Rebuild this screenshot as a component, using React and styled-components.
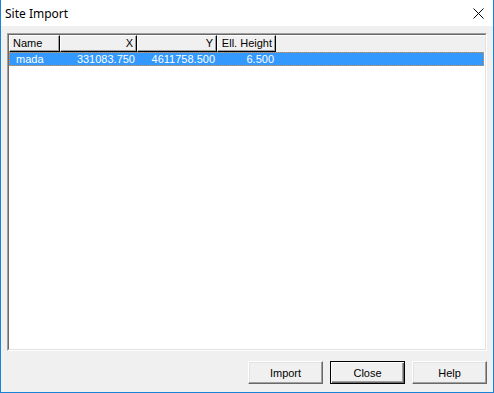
import styled, { createGlobalStyle } from 'styled-components';

const GlobalStyle = createGlobalStyle`
	html, body {
		margin: 0;
		padding: 0;
		background: #ffffff;
	}
	* {
		box-sizing: border-box;
	}
`;

const Window = styled.div`
	width: 494px;
	height: 393px;
	display: flex;
	flex-direction: column;
	border: 1px solid #1883d7;
	border-top: none;
	background: #f0f0f0;
	font-family: 'Liberation Sans', Arial, sans-serif;
	font-size: 11px;
	color: #000;
`;

const TitleBar = styled.div`
	height: 26px;
	flex: none;
	display: flex;
	align-items: center;
	justify-content: space-between;
	background: #ffffff;
	padding: 0 9px 0 4px;
`;

const Title = styled.span`
	font-family: 'Noto Sans', 'Open Sans', sans-serif;
	font-size: 12px;
	line-height: 16px;
	padding-top: 1px;
`;

const CloseIcon = styled.svg`
	width: 11px;
	height: 11px;
	display: block;
	margin-top: 1px;
`;

const Body = styled.div`
	flex: 1;
	display: flex;
	flex-direction: column;
	padding: 7px 6px 8px 6px;
`;

const ListOuter = styled.div`
	flex: 1;
	border: 1px solid;
	border-color: #a0a0a0 #ffffff #ffffff #a0a0a0;
	display: flex;
`;

const ListInner = styled.div`
	flex: 1;
	border: 1px solid;
	border-color: #696969 #e3e3e3 #e3e3e3 #696969;
	background: #ffffff;
	display: flex;
	flex-direction: column;
`;

const HeaderRow = styled.div`
	display: flex;
	height: 17px;
	flex: none;
	background: #f0f0f0;
`;

const HeaderCell = styled.div`
	width: ${(p) => p.$w}px;
	flex: ${(p) => (p.$fill ? '1' : 'none')};
	height: 17px;
	border-top: 1px solid #ffffff;
	border-left: ${(p) => (p.$fill ? 'none' : '1px solid #ffffff')};
	border-right: ${(p) => (p.$fill ? 'none' : '1px solid #000000')};
	border-bottom: ${(p) => (p.$fill ? 'none' : '1px solid #000000')};
	box-shadow: ${(p) => (p.$fill ? 'none' : 'inset -1px -1px 0 #a0a0a0')};
	display: flex;
	align-items: center;
	justify-content: ${(p) => (p.$right ? 'flex-end' : 'flex-start')};
	padding: 0 3px 0 3px;
	line-height: 13px;
	white-space: nowrap;
	overflow: hidden;
`;

const Rows = styled.div`
	flex: 1;
	padding-top: 0;
`;

const Row = styled.div`
	display: flex;
	height: 14px;
	margin-right: 1px;
	background: ${(p) => (p.$selected ? '#3399ff' : 'transparent')};
	color: ${(p) => (p.$selected ? '#ffffff' : '#000000')};
	border: 1px dotted ${(p) => (p.$selected ? '#f28c28' : 'transparent')};
`;

const Cell = styled.div`
	width: ${(p) => p.$w}px;
	flex: none;
	display: flex;
	align-items: center;
	justify-content: ${(p) => (p.$right ? 'flex-end' : 'flex-start')};
	padding: ${(p) => (p.$right ? '0 2px 0 0' : '0 0 0 6px')};
	line-height: 12px;
	white-space: nowrap;
`;

const ButtonRow = styled.div`
	display: flex;
	justify-content: flex-end;
	gap: 7px;
	margin-top: 10px;
	padding-right: 0;
`;

const Button = styled.button`
	width: 75px;
	height: 23px;
	padding: 0;
	margin: 0;
	font-family: 'Liberation Sans', Arial, sans-serif;
	font-size: 11px;
	color: #000;
	background: #f0f0f0;
	border: 1px solid;
	border-color: ${(p) => (p.$default ? '#000000' : '#ffffff #696969 #696969 #ffffff')};
	box-shadow: ${(p) =>
		p.$default
			? 'inset 1px 1px 0 #ffffff, inset -1px -1px 0 #696969, inset -2px -2px 0 #a0a0a0'
			: 'inset -1px -1px 0 #a0a0a0, inset 1px 1px 0 #e3e3e3'};
	cursor: pointer;
`;

const columns = [
	{ key: 'name', label: 'Name', w: 51 },
	{ key: 'x', label: 'X', w: 77, right: true },
	{ key: 'y', label: 'Y', w: 80, right: true },
	{ key: 'h', label: 'Ell. Height', w: 59, right: true },
];

const sites = [{ name: 'mada', x: '331083.750', y: '4611758.500', h: '6.500' }];

const App = () => {
	return (
		<>
			<GlobalStyle />
			<Window>
				<TitleBar>
					<Title>Site Import</Title>
					<CloseIcon viewBox="0 0 11 11">
						<path d="M0.5 0.5 L10.5 10.5 M10.5 0.5 L0.5 10.5" stroke="#000" strokeWidth="1" fill="none" />
					</CloseIcon>
				</TitleBar>
				<Body>
					<ListOuter>
						<ListInner>
							<HeaderRow>
								{columns.map((c) => (
									<HeaderCell key={c.key} $w={c.w} $right={c.right}>
										{c.label}
									</HeaderCell>
								))}
								<HeaderCell $fill />
							</HeaderRow>
							<Rows>
								{sites.map((s) => (
									<Row key={s.name} $selected>
										{columns.map((c, i) => (
											<Cell key={c.key} $w={i === 0 ? c.w - 1 : c.w} $right={c.right}>
												{s[c.key]}
											</Cell>
										))}
									</Row>
								))}
							</Rows>
						</ListInner>
					</ListOuter>
					<ButtonRow>
						<Button>Import</Button>
						<Button $default>Close</Button>
						<Button>Help</Button>
					</ButtonRow>
				</Body>
			</Window>
		</>
	);
};

export default App;
